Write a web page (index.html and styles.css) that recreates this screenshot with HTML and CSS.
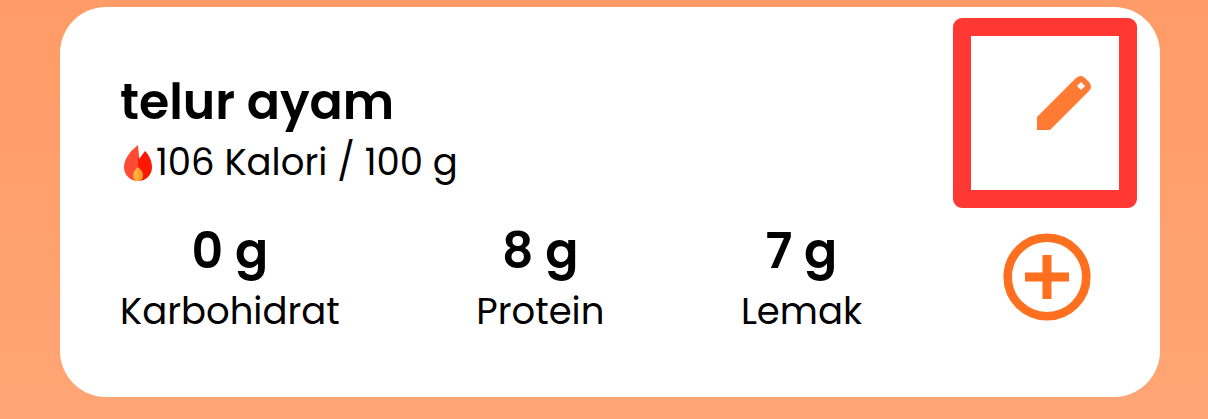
FILE: index.html
```html
<!DOCTYPE html>
<html lang="id">
<head>
<meta charset="utf-8">
<meta name="viewport" content="width=device-width, initial-scale=1">
<title>telur ayam</title>
<link rel="stylesheet" href="styles.css">
</head>
<body>
<main class="food-card">
  <div class="details">
    <h1 class="food-name">telur ayam</h1>
    <p class="calories">
      <svg class="flame" viewBox="0 0 30 38" aria-hidden="true">
        <path fill="#ff4b36" d="M15 1C10 5 1 13 1 23c0 8 6 14 14 14z"/>
        <path fill="#fb1800" d="M15 1v36c8 0 14-6 14-14 0-6-3-12-7-16l-6 8z"/>
        <path fill="#ffb13b" d="M15 23c-3 3-5 5-5 8 0 4 2 6 5 6z"/>
        <path fill="#ff9d2b" d="M15 23c3 3 5 5 5 8 0 4-2 6-5 6z"/>
      </svg><span>106 Kalori / 100 g</span>
    </p>
    <dl class="nutrients">
      <div class="nutrient"><dt class="label">Karbohidrat</dt><dd class="amount">0 g</dd></div>
      <div class="nutrient"><dt class="label">Protein</dt><dd class="amount">8 g</dd></div>
      <div class="nutrient"><dt class="label">Lemak</dt><dd class="amount">7 g</dd></div>
    </dl>
  </div>
  <div class="actions">
    <button class="action" type="button" aria-label="Edit">
      <svg class="pencil" viewBox="0 0 54 54" aria-hidden="true">
        <path fill="#ff7a33" fill-rule="evenodd" d="M0 54V41L39 2q5-4 9 0l4 4q4 5 0 9L13 54zM44 6l-4 4 4 4 4-4z"/>
      </svg>
    </button>
    <button class="action" type="button" aria-label="Tambah">
      <svg class="plus" viewBox="0 0 88 88" fill="none" stroke="#ff6f20" aria-hidden="true">
        <circle cx="44" cy="44" r="39.3" stroke-width="8.6"/>
        <path stroke-width="9" d="M44 22v44M22 44h44"/>
      </svg>
    </button>
  </div>
  <div class="highlight"></div>
</main>
</body>
</html>
```
FILE: styles.css
```css
* {
  box-sizing: border-box;
}

body {
  margin: 0;
  min-height: 100vh;
  padding: 7px 48px 22px 60px;
  background: linear-gradient(#ff9b66, #ffa575);
  color: #000;
  font-family: Poppins, Inter, "Open Sans", sans-serif;
}

.food-card {
  position: relative;
  display: flex;
  justify-content: space-between;
  padding: 64px 69px 56px 60px;
  border-radius: 46px;
  background: #fff;
}

.details {
  flex: 0 1 742px;
}

.food-name,
.amount {
  margin: 0;
  font-size: 49px;
  line-height: 62px;
  font-weight: 600;
}

.calories {
  display: flex;
  align-items: center;
  margin: 0;
  font-size: 37px;
  line-height: 59px;
}

.flame {
  width: 30px;
  height: 38px;
  margin: 0 3px;
}

.nutrients {
  display: flex;
  justify-content: space-between;
  margin: 28px 0 0;
}

.nutrient {
  display: flex;
  flex-direction: column-reverse;
  text-align: center;
}

.label {
  font-size: 37px;
  line-height: 59px;
}

.actions {
  display: flex;
  flex-direction: column;
  align-items: flex-end;
  justify-content: space-between;
  padding: 5px 0 20px;
}

.action {
  padding: 0;
  border: 0;
  background: none;
  cursor: pointer;
}

.action svg {
  display: block;
}

.pencil {
  width: 54px;
  height: 54px;
}

.plus {
  width: 88px;
  height: 88px;
}

.highlight {
  position: absolute;
  top: 11px;
  right: 23px;
  width: 184px;
  height: 190px;
  border: 18px solid #ff3834;
  border-radius: 9px;
  pointer-events: none;
}
```
